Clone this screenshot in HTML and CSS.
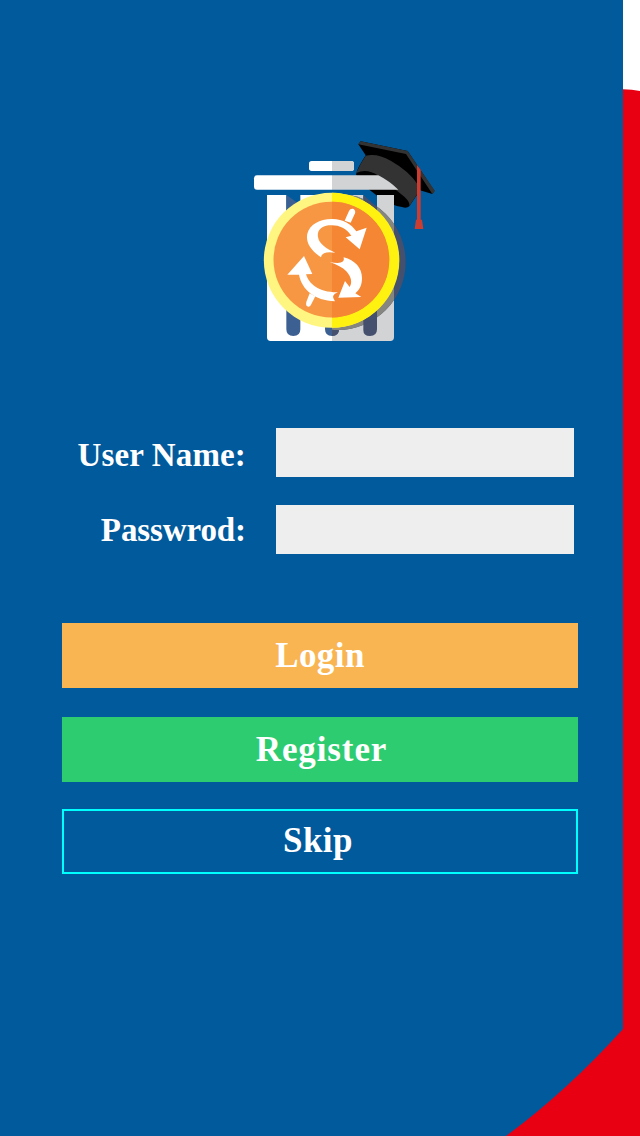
FILE: index.html
```html
<!DOCTYPE html>
<html lang="en">
<head>
<meta charset="utf-8">
<title>Login</title>
<link rel="stylesheet" href="styles.css">
</head>
<body>
<svg class="backdrop" viewBox="0 0 640 1136" aria-hidden="true">
  <path fill="#fff" d="M623 0H640V92H623Z"/>
  <path fill="#e80012" d="M623 89.3Q632 89.5 640 91V1136H506Q566 1092 623 1029Z"/>
</svg>
<main class="screen">
  <svg class="logo" viewBox="0 0 600 660" role="img" aria-label="Logo">
    <defs>
      <clipPath id="gray"><path d="M261 195H355V633H261ZM396 195H447V633H396ZM355 612H396V633H355Z"/></clipPath>
      <clipPath id="right"><path d="M261 0H600V660H261Z"/></clipPath>
    </defs>
    <path fill="#000" d="M340 43L347 34L488 63L568 182L562 192L525 181L493 229Q485 236 471 231Q440 226 408 206L373 179L333 134Q336 116 362 76Z"/>
    <path fill="#333" d="M340 43L347 34L488 63L570 183L562 192L483 72ZM362 77Q397 69 437 92Q492 123 519 164L522 184L493 229Q497 218 478 200L400 137Q365 114 334 129Q339 113 362 77Z"/>
    <path fill="#cc3d31" d="M516 105L527 119V269H531L535 297H509L513 269H516Z"/>
    <rect fill="#fff" x="192" y="93" width="135" height="30" rx="8"/>
    <path fill="#d1d3d5" d="M261 93H319Q327 93 327 101V115Q327 123 319 123H261Z"/>
    <path fill="#fff" d="M36 136H261V179H36Q27 179 27 170V145Q27 136 36 136Z"/>
    <path fill="#d1d3d5" d="M261 136H400Q433 153 460 179H261Z"/>
    <path fill="#fff" d="M66 195H124V543H166V195H261V633H77Q66 633 66 622Z"/>
    <path fill="#d1d3d5" d="M261 195H355V543H396V195H447V622Q447 633 436 633H261Z"/>
    <path fill="#fff" d="M124 540H166V633H124Z"/>
    <path fill="#d1d3d5" d="M355 540H396V633H355Z"/>
    <path fill="#3d6092" d="M124 195L166 224V598Q166 618 145 618T124 598ZM240 585H282V598Q282 618 261 618T240 598Z"/>
    <path fill="#44506e" d="M355 195L396 232V598Q396 618 375 618T355 598ZM261 585H282V598Q282 618 261 618Z"/>
    <g clip-path="url(#right)">
      <circle fill="#44506e" cx="278" cy="396" r="204"/>
      <circle fill="#85867f" clip-path="url(#gray)" cx="278" cy="396" r="204"/>
    </g>
    <circle fill="#fff682" cx="259" cy="391" r="202.500"/>
    <path fill="#fff110" d="M261 188.500A202 202.500 0 0 1 261 593.500Z"/>
    <circle fill="#f79743" cx="259" cy="389" r="173.500"/>
    <path fill="#f58634" d="M261 215.500A172 173.500 0 0 1 261 562.500Z"/>
    <g fill="#fff">
      <path d="M299 272L312 243C318 230 334 237 330 250L317 278Z"/>
      <path d="M194 490L211 499L198 524C191 536 180 529 184 516Z"/>
      <path d="M228 382C195 358 182 337 187 311C194 283 226 266 263 267C294 268 319 282 334 304L365 293L344 358L302 322L319 317C303 292 277 283 251 286C226 290 216 303 219 321C222 341 243 356 271 368Q230 362 228 382Z"/>
      <path d="M254 396Q302 406 296 382C330 391 351 413 351 444C351 464 345 478 331 490L349 501L280 503L300 453L314 471C323 457 318 439 304 424C293 412 276 404 254 396Z"/>
      <path d="M127 434L177 378L202 432L183 433C192 462 221 488 279 487Q255 495 270 514C208 511 171 479 162 434Z"/>
    </g>
  </svg>
  <form class="form">
    <div class="row"><label class="label" for="user">User Name:</label><input class="field" id="user" type="text"></div>
    <div class="row"><label class="label label-password" for="pass">Passwrod:</label><input class="field" id="pass" type="password"></div>
    <button class="button login" type="button"><span>Login</span></button>
    <button class="button register" type="button"><span>Register</span></button>
    <button class="button skip" type="button"><span>Skip</span></button>
  </form>
</main>
</body>
</html>
```
FILE: styles.css
```css
* { box-sizing: border-box; }
body {
  margin: 0;
  width: 640px;
  height: 1136px;
  overflow: hidden;
  background: #005a9c;
  font-family: "Bodoni MT", "Liberation Serif", serif;
  font-weight: bold;
  color: #fff;
}
.backdrop { position: absolute; inset: 0; width: 640px; height: 1136px; }
.screen {
  position: relative;
  display: flex;
  flex-direction: column;
  padding: 130px 62px 0;
}
.logo { display: block; width: 200px; height: 220px; margin-left: 183px; }
.form { display: flex; flex-direction: column; margin-top: 78px; }
.row {
  display: flex;
  align-items: center;
  height: 49px;
  margin-bottom: 28px;
}
.label {
  width: 184px;
  margin-right: 30px;
  padding-top: 5px;
  font-size: 33px;
  line-height: 45px;
  text-align: right;
  white-space: nowrap;
  letter-spacing: 0.15px;
}
.label-password { padding-top: 2px; letter-spacing: -0.1px; }
.field {
  width: 298px;
  height: 49px;
  padding: 0 12px;
  border: 0;
  border-radius: 0;
  background: #eee;
  font: inherit;
  font-size: 28px;
  color: #222;
}
.button {
  display: block;
  width: 516px;
  height: 65px;
  padding: 0;
  border: 0;
  font: inherit;
  font-size: 35px;
  line-height: 65px;
  color: #fff;
}
.login { margin-top: 41px; background: #f9b552; letter-spacing: 0.4px; }
.register { margin-top: 29px; background: #2ecc71; letter-spacing: 0.9px; padding-left: 3px; }
.skip {
  margin-top: 27px;
  padding: 0 4px 2px 0;
  border: 2px solid #00ffff;
  background: transparent;
  line-height: 57px;
  letter-spacing: 0.5px;
}
```
